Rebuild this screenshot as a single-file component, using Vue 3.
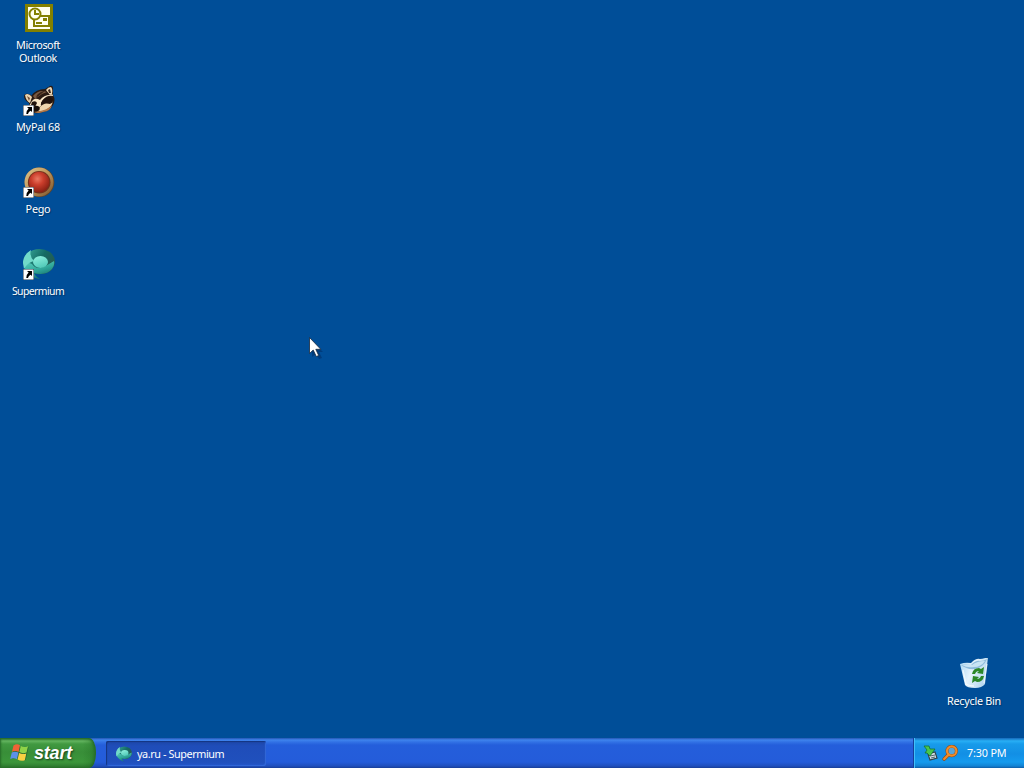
<script setup>
const shortcuts = [
  { id: 'outlook', lines: ['Microsoft', 'Outlook'] },
  { id: 'mypal', lines: ['MyPal 68'], link: true },
  { id: 'pego', lines: ['Pego'], link: true },
  { id: 'supermium', lines: ['Supermium'], link: true },
]
</script>

<template>
  <main class="screen">
    <svg class="defs" width="0" height="0">
      <defs>
        <radialGradient id="redBall" cx=".42" cy=".35" r=".65">
          <stop offset="0" stop-color="#ea7862" /><stop offset=".45" stop-color="#cb3e2c" /><stop offset="1" stop-color="#8b2114" />
        </radialGradient>
        <linearGradient id="goldRing" x1="0" y1="0" x2="1" y2="1">
          <stop offset="0" stop-color="#dfc58b" /><stop offset=".5" stop-color="#bd9559" /><stop offset="1" stop-color="#76502c" />
        </linearGradient>
        <linearGradient id="tealBack" x1="0" y1="0" x2="1" y2=".6">
          <stop offset="0" stop-color="#38a89b" /><stop offset=".55" stop-color="#146b63" /><stop offset="1" stop-color="#28584f" />
        </linearGradient>
        <linearGradient id="tealFront" x1="0" y1="0" x2=".5" y2="1">
          <stop offset="0" stop-color="#5fd3c1" /><stop offset=".6" stop-color="#2fa698" /><stop offset="1" stop-color="#146f6e" />
        </linearGradient>
        <linearGradient id="tealBall" x1=".2" y1="0" x2=".6" y2="1">
          <stop offset="0" stop-color="#8ff0dd" /><stop offset="1" stop-color="#4fc9b8" />
        </linearGradient>
        <linearGradient id="binBody" x1="0" y1="0" x2="1" y2=".4">
          <stop offset="0" stop-color="#a7d5f2" /><stop offset=".5" stop-color="#e5f3fc" /><stop offset="1" stop-color="#b9d9f0" />
        </linearGradient>
        <symbol id="outlook" viewBox="0 0 32 32">
          <rect x="2" y="2" width="28" height="28" fill="#838000" />
          <rect x="5" y="5" width="22" height="22" fill="#fffff0" />
          <path d="M17 14h9v10H11v-6" fill="#fffff0" stroke="#838000" stroke-width="2" />
          <path d="M20 16h4v3h-4zM13 20h6v2h-6z" fill="#838000" />
          <circle cx="12" cy="12" r="5.5" fill="#fffff0" stroke="#838000" stroke-width="2" />
          <path d="M12 8v4h4" fill="none" stroke="#838000" stroke-width="2" />
        </symbol>
        <symbol id="mypal" viewBox="0 0 32 32">
          <path d="M8 12Q13 5 22 5l5-3q3-1 3 3l0 6q3 5 0 10-3 6-10 7-8 3-13-1L6 19q-5-3-5-7 1-4 7-1z" fill="#2a1a12" />
          <path d="M2 11q3-3 7 2l-2 6q-4-2-5-8z" fill="#ead4af" />
          <path d="M4 12l3 2-1 3z" fill="#76523b" />
          <path d="M23 6q2-3 5-3 2 2 1 7l-2 1z" fill="#efd9b6" />
          <path d="M25 6l2-1 1 4-2 0z" fill="#3f281d" />
          <path d="M10 12Q16 5 24 8l-5 2-7 5z" fill="#79583f" />
          <path d="M14 11Q18 7 22 7l-4 3-5 4z" fill="#3a251a" />
          <path d="M9 17q3-4 8-1 4-5 10-5 3-2 3 1-6-1-9 3-4 4-3 7l-5 3-6 1-1-4z" fill="#f8e5c5" />
          <path d="M9 18q4-2 5 1l-2 4-4-2zM18 19q2-6 9-6l3 2-2 4q-5-1-9 3z" fill="#21130d" />
          <path d="M17 23q4-5 10-3 3-1 3-3-1 6-7 9-6 2-10 1z" fill="#efd5ad" />
          <path d="M17 27q7-1 12-6-1 6-9 7-5 2-9 0z" fill="#b67b4b" />
          <ellipse cx="13.5" cy="24.5" rx="3.2" ry="2.7" fill="#160d0a" />
        </symbol>
        <symbol id="pego" viewBox="0 0 32 32">
          <circle cx="16.5" cy="16.3" r="14.8" fill="#604326" />
          <circle cx="16" cy="16" r="14.5" fill="url(#goldRing)" />
          <circle cx="16.2" cy="16.3" r="11.3" fill="#74301c" />
          <circle cx="16.1" cy="16" r="10.3" fill="url(#redBall)" />
        </symbol>
        <symbol id="supermium" viewBox="0 0 32 32">
          <path d="M3 6Q15-3 27 4q7 6 4 14-4 8-13 8-7 1-13-3z" fill="url(#tealBack)" />
          <path d="M1 13q-2 9 9 16 5 2 7 2-5-3-6-6 12 3 18-4 3-4 2-8-5 3-10 6-8 3-12-3z" fill="url(#tealFront)" />
          <path d="M8 2Q0 7 0 15l1 6q4-7 10-8Q6 8 8 2z" fill="#72dac9" />
          <ellipse cx="17.5" cy="14" rx="7.5" ry="6" fill="url(#tealBall)" />
        </symbol>
      </defs>
    </svg>

    <section class="desktop">
      <nav class="shortcuts">
        <div v-for="item in shortcuts" :key="item.id" class="shortcut">
          <div class="icon">
            <svg width="32" height="32"><use :href="'#' + item.id" /></svg>
            <svg v-if="item.link" class="link-badge" width="11" height="11" viewBox="0 0 11 11">
              <path d="M0 0h11v11H0z" fill="#fff" stroke="#253342" stroke-width="1" />
              <path d="M4 2h5v5L7.7 5.7Q5.5 6.5 5 9H3.3Q3 6 5.6 3.6z" fill="#000" />
            </svg>
          </div>
          <div class="label"><span v-for="line in item.lines" :key="line" :class="line.toLowerCase()">{{ line }}</span></div>
        </div>
      </nav>

      <div class="shortcut bin">
        <div class="icon">
          <svg width="32" height="32" viewBox="0 0 32 32">
            <path d="M1 6q5-2 11-1 5-5 9-4 3 0 8-2l-3 27q-3 4-10 4-8 0-10-3z" fill="url(#binBody)" />
            <path d="M2 7q5-1 10 0 5-5 9-4 4 0 7-2-3 8-12 10-8 1-14-4z" fill="#8ebbdc" />
            <path d="M3 7q5-1 10 0 5-4 13-4-4 6-11 6-7 1-12-2z" fill="#c8e4f5" />
            <path d="M4 12l3 14q3 2 8 2M28 6l-3 19" fill="none" stroke="#fff" stroke-width="1.3" opacity=".65" />
            <g fill="#2b8728">
              <path d="M13 16q1-6 7-6l2 1 3-2-1 7-6-1 2-2q-3 0-4 3z" />
              <path d="M25 18q-1 6-7 6l-2-1-3 2 1-7 6 1-2 2q3 0 4-3z" />
            </g>
          </svg>
        </div>
        <div class="label"><span>Recycle Bin</span></div>
      </div>

      <svg class="pointer" width="18" height="26" viewBox="0 0 18 26">
        <path d="M4 5v16l4-3 3 5 3-1-3-6h4z" fill="#002e66" opacity=".55" />
        <path d="M1.5 1.5v16l3.7-3.5 3.1 6.5 2.4-1-2.9-6.2h5z" fill="#fff" stroke="#17283e" stroke-width=".8" />
      </svg>
    </section>

    <footer class="taskbar">
      <button class="start">
        <svg width="20" height="20" viewBox="0 0 20 20">
          <g class="flag-shade" transform="translate(.7 .9)"><path d="M3 3q3-3 7 0 3 2 8 0l-3 13q-4 2-7-1-3-2-7 0z" /></g>
          <path d="M3.5 2.5Q7 0 10 2.3L8.6 9Q5.5 7 2 8.7z" fill="#ef6336" />
          <path d="M10.8 3q3 2 7.2.2L16.5 9.6q-4 1.5-7.2-.5z" fill="#8fd348" />
          <path d="M1.8 9.5q3-1.7 6.7 0L6.9 16.2Q4 14.5.2 15.9z" fill="#5c91e9" />
          <path d="M9.1 10q3.5 1.9 7.2.5L14.8 17.2q-3.5 1.5-7.2-.7z" fill="#f9d142" />
        </svg>
        <span>start</span>
      </button>
      <button class="task">
        <svg width="16" height="16"><use href="#supermium" /></svg>
        <span>ya.ru - Supermium</span>
      </button>
      <div class="tray">
        <svg width="16" height="16" viewBox="0 0 16 16">
          <path d="M5 9l7-2 2 6-7 2z" fill="#d8e4e9" stroke="#31424a" stroke-width="1.2" />
          <path d="M7 11l5-1M8 13l4-1" stroke="#52646b" />
          <path d="M1 1l5 0 1 3h5L7 11 4 8H2l2-3z" fill="#48c64d" stroke="#147434" stroke-width=".8" />
        </svg>
        <svg width="16" height="16" viewBox="0 0 16 16">
          <path d="M6.6 9.6L2.2 14" stroke="#8b4b1b" stroke-width="3.6" stroke-linecap="round" />
          <circle cx="9.7" cy="6" r="4.7" fill="#58a5d8" stroke="#894c1b" stroke-width="3" />
          <circle cx="9.7" cy="6" r="4.7" fill="none" stroke="#f18b28" stroke-width="2.2" />
          <path d="M6.6 9.6L2.2 14" stroke="#f18b28" stroke-width="2.4" stroke-linecap="round" />
        </svg>
        <time>7:30 PM</time>
      </div>
    </footer>
  </main>
</template>

<style>
body { overflow: hidden; }
</style>

<style scoped>
.screen { width: 1024px; height: 768px; display: flex; flex-direction: column; background: #004e98; color: #fff; font: 10.8px/13px "Noto Sans", "Open Sans", sans-serif; letter-spacing: -.25px; }
.defs { position: absolute; }
.desktop { position: relative; flex: 1; }
.shortcuts { width: 76px; padding-top: 2px; }
.shortcut { width: 76px; height: 82px; display: flex; flex-direction: column; align-items: center; }
.icon { position: relative; width: 32px; height: 32px; margin-left: 1px; }
.icon svg { display: block; }
.icon .link-badge { position: absolute; left: 0; bottom: 0; }
.label { margin-top: 4px; display: flex; flex-direction: column; align-items: center; white-space: nowrap; text-shadow: 1px 1px 1px #003568; }
.microsoft { letter-spacing: -.45px; }
.outlook { letter-spacing: -.4px; }
.supermium { font-size: 10.4px; line-height: 15px; letter-spacing: -.55px; }
.bin { position: absolute; left: 936px; top: 658px; }
.pointer { position: absolute; left: 308px; top: 336px; }
.taskbar { height: 30px; display: flex; align-items: stretch; background: linear-gradient(#2456b3 0, #3f84ee 2px, #3272e5 4px, #245edb 7px, #245cda 24px, #204fbd 28px, #183e98 30px); }
button { border: 0; padding: 0; margin: 0; color: #fff; font: inherit; letter-spacing: inherit; display: flex; align-items: center; }
.start { width: 96px; padding-left: 10px; gap: 4px; border-radius: 0 7px 7px 0 / 0 14px 14px 0; background: linear-gradient(90deg, #0000 86%, #1f6b2066 100%), linear-gradient(#296c2b, #63b45f 3px, #419941 6px, #388e38 14px, #3c963b 24px, #2b762d 30px); box-shadow: inset 1px 0 2px #276d29, inset -2px 0 3px #276d29; font: italic bold 18px/24px "Liberation Sans", Arial, sans-serif; text-shadow: 1px 1px 2px #17401c; }
.start span { letter-spacing: -.2px; }
.flag-shade { fill: #1b4e2c; opacity: .55; }
.task { width: 160px; height: 25px; margin: 3px 0 0 10px; padding-left: 10px; gap: 5px; border-radius: 2px; background: linear-gradient(#1c46a6, #1f4db9 5px, #2050bd 21px, #2256c9); box-shadow: inset 1px 1px 1px #143580, inset -1px -1px 1px #3269d9; }
.task span { letter-spacing: -.4px; }
.tray { margin-left: auto; box-sizing: border-box; width: 111px; padding-left: 9px; display: flex; align-items: center; gap: 3px; border-left: 1px solid #15409a; box-shadow: inset 1px 0 #42c0fa; background: linear-gradient(#1669bb, #28aff5 3px, #189bea 6px, #128fe5 16px, #159bee 24px, #1283d4 28px, #0f5ca7); }
.tray time { margin: 0 0 2px 6px; letter-spacing: -.15px; }
</style>
